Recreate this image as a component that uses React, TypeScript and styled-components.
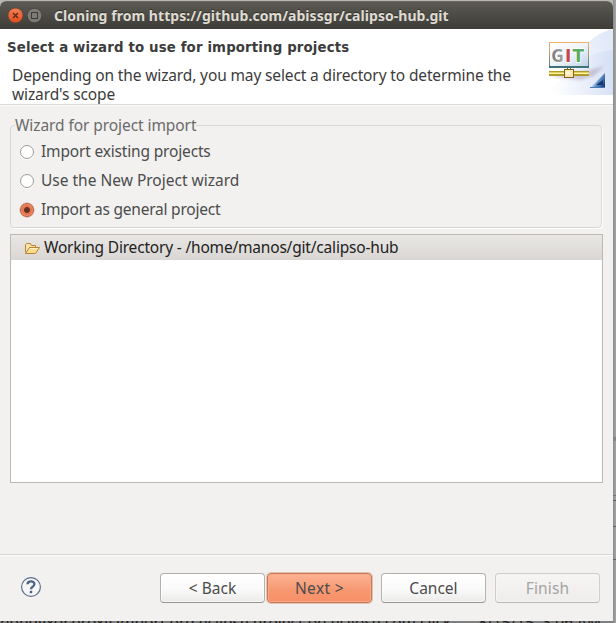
import React, { useState } from 'react';
import styled, { createGlobalStyle, css } from 'styled-components';

const GlobalStyle = createGlobalStyle`
  *, *::before, *::after { box-sizing: border-box; }
  html, body { margin: 0; padding: 0; overflow: hidden; }
  body { font-family: "Noto Sans", "Open Sans", sans-serif; background: #9c9c9c; }
`;

const Desktop = styled.div`
  width: 616px;
  height: 623px;
  overflow: hidden;
  padding-top: 1px;
  background:
    linear-gradient(#858585, #858585) 613px 437px / 3px 4px no-repeat,
    linear-gradient(#747474, #747474) 613px 495px / 3px 1px no-repeat,
    linear-gradient(#5e5e5e, #5e5e5e) 613px 500px / 3px 1px no-repeat,
    linear-gradient(#606060, #606060) 613px 526px / 3px 1px no-repeat,
    linear-gradient(#606060, #606060) 613px 559px / 3px 1px no-repeat,
    linear-gradient(90deg, #8b8b8b, #a5a5a5) 613px 0 / 3px 100% no-repeat,
    #b4b7b2;
`;

const Window = styled.main`
  width: 613px;
  height: 620px;
  display: flex;
  flex-direction: column;
  border-radius: 6px 6px 0 0;
  overflow: hidden;
  background: #f2f1f0;
  color: #4c4c4c;
`;

const TitleBar = styled.header`
  flex: none;
  height: 28px;
  display: flex;
  align-items: center;
  padding: 0 8px;
  background: linear-gradient(#5b5952, #3d3c37);
  border-top: 1px solid #69675f;
`;

const WindowControl = styled.button`
  width: 15px;
  height: 15px;
  padding: 0;
  margin-right: 4px;
  border: 0;
  background: none;
  svg { display: block; }
`;

const Title = styled.h1`
  margin: 0 0 0 8px;
  font: 700 14px/20px "Noto Sans", sans-serif;
  letter-spacing: 0.05px;
  white-space: nowrap;
  color: #dfdbd2;
  text-shadow: 0 -1px #33322e;
`;

const Banner = styled.section`
  flex: none;
  height: 76px;
  display: flex;
  justify-content: space-between;
  background: #fff;
  border-bottom: 1px solid #dcdad8;
`;

const BannerText = styled.div`
  padding: 10px 0 0 7px;
  white-space: nowrap;
`;

const BannerTitle = styled.h2`
  margin: 0;
  font: 700 13.33px/18px "DejaVu Sans", sans-serif;
  letter-spacing: 0.14px;
  color: #3c3c3c;
`;

const BannerLine = styled.p<{ $first?: boolean }>`
  margin: ${p => (p.$first ? '9px' : '0')} 0 0 5px;
  font-size: 15.5px;
  line-height: 19px;
  letter-spacing: ${p => (p.$first ? '-0.135px' : '-0.12px')};
  color: #3c3c3c;
`;

const BannerArt = styled.svg`
  flex: none;
  display: block;
`;

const Content = styled.section`
  flex: 1;
  padding: 9px 10px 0;
  border-top: 1px solid #fafafa;
`;

const Group = styled.fieldset`
  min-width: 0;
  width: 592px;
  height: 113px;
  margin: 0;
  padding: 0 0 0 9px;
  border: 1px solid #d9d7d4;
  border-radius: 4px;
  box-shadow: 1px 1px #fff;
`;

const Legend = styled.legend`
  margin-left: -5px;
  padding: 0;
  font-size: 15.5px;
  line-height: 20px;
  letter-spacing: -0.08px;
  color: #6c6b6a;
`;

const Options = styled.div`
  margin-top: 1px;
`;

const Option = styled.label<{ $spacing: number }>`
  height: 29px;
  display: flex;
  align-items: center;
  font-size: 15.5px;
  line-height: 20px;
  letter-spacing: ${p => p.$spacing}px;
`;

const Radio = styled.input`
  appearance: none;
  flex: none;
  width: 14px;
  height: 14px;
  margin: 2px 7px 0 0;
  border: 1px solid #9c9a97;
  border-radius: 50%;
  background: #fff;
  box-shadow: 0 1px #fff;
  &:checked {
    border-color: #b8583a;
    background: radial-gradient(circle, #5f3322 0 2.5px, #e97550 3.4px 4.6px, #f39873 6px);
    box-shadow: 0 0 0 0.5px #d99c86;
  }
`;

const Tree = styled.div`
  width: 593px;
  height: 249px;
  margin-top: 6px;
  border: 1px solid #beb8b2;
  background: #fff;
`;

const TreeRow = styled.div`
  height: 25px;
  padding: 0 0 2px 13px;
  display: flex;
  align-items: center;
  gap: 3px;
  background: linear-gradient(#e9e7e5, #d9d6d3);
  font-size: 15.5px;
  line-height: 20px;
  letter-spacing: -0.19px;
  color: #222;
  white-space: pre;
  svg { display: block; margin-top: 2px; }
`;

const Footer = styled.footer`
  flex: none;
  height: 67px;
  display: flex;
  align-items: flex-start;
  padding: 17px 13px 0 20px;
  border-top: 1px solid #d9d7d5;
  box-shadow: inset 0 1px #fbfbfa;
`;

const Help = styled.button`
  width: 22px;
  height: 22px;
  margin: 4px auto 0 0;
  padding: 0;
  border: 0;
  background: none;
  svg { display: block; }
`;

const Button = styled.button<{ $kind?: 'default' | 'plain'; $gap?: number; $spacing?: number }>`
  width: 105px;
  height: 30px;
  margin: 1px 0 0 ${p => p.$gap ?? 0}px;
  padding: 0 0 1px;
  border: 1px solid #b4b1ad;
  border-bottom-color: #989590;
  border-radius: 4px;
  background: linear-gradient(#fff, #fafafa 55%, #ebeae9);
  box-shadow: inset 0 0 0 1px rgba(255, 255, 255, 0.6);
  font: 15.5px/20px "Noto Sans", sans-serif;
  letter-spacing: ${p => p.$spacing ?? 0}px;
  color: #4c4c4c;
  &:disabled {
    color: #a5a4a2;
    border-color: #cfccc9;
    border-bottom-color: #bcb9b5;
    background: linear-gradient(#f6f5f4, #eeedec);
    box-shadow: inset 0 0 0 1px #f6f5f4;
  }
  ${p =>
    p.$kind === 'default' &&
    css`
      border-color: #c17959;
      background: linear-gradient(#fcb294, #f79770 60%, #f78f68);
      box-shadow: inset 0 0 0 1px #fbaa88, 0 0 0 1px #e5c2b3;
    `}
`;

const Behind = styled.div`
  width: 613px;
  height: 2px;
  overflow: hidden;
  display: flex;
  justify-content: space-between;
  padding: 0 12px 0 0;
  background: #7e7e7e;
  color: #202020;
  font: 15.5px/16px "Noto Sans", sans-serif;
  white-space: nowrap;
  span { margin-top: -7px; }
`;

function GitArt() {
  return (
    <BannerArt width="73" height="66" viewBox="540 29 73 66">
      <defs>
        <linearGradient id="sky" x1="0" y1="0.7" x2="1" y2="0.4">
          <stop offset="0.05" stopColor="#fff" />
          <stop offset="0.55" stopColor="#f0f4fc" />
          <stop offset="1" stopColor="#e2e9f8" />
        </linearGradient>
        <linearGradient id="swoosh" x1="0" x2="1">
          <stop offset="0.3" stopColor="#dfe7f8" stopOpacity="0" />
          <stop offset="1" stopColor="#ccd9f3" stopOpacity="0.6" />
        </linearGradient>
        <linearGradient id="frame" x1="0" y1="0" x2="0" y2="1">
          <stop offset="0" stopColor="#edb163" />
          <stop offset="0.45" stopColor="#b0a17b" />
          <stop offset="1" stopColor="#447a80" />
        </linearGradient>
        <linearGradient id="screen" x1="0" y1="0" x2="1" y2="1">
          <stop offset="0" stopColor="#fff" />
          <stop offset="0.5" stopColor="#eef4fa" />
          <stop offset="1" stopColor="#bdd1e6" />
        </linearGradient>
        <linearGradient id="letterG" x1="0" x2="1">
          <stop offset="0" stopColor="#777" />
          <stop offset="1" stopColor="#a9a9a9" />
        </linearGradient>
        <linearGradient id="corner" x1="0" x2="1" y1="0.2" y2="0.8">
          <stop offset="0.3" stopColor="#e1efff" />
          <stop offset="0.6" stopColor="#5e8cc4" />
          <stop offset="1" stopColor="#183a77" />
        </linearGradient>
        <filter id="soft" x="-20%" y="-50%" width="140%" height="200%">
          <feGaussianBlur stdDeviation="1.8" />
        </filter>
      </defs>
      <path d="M540 95C562 83 568 70 582 50C590 39 600 32 613 29V95Z" fill="url(#sky)" />
      <path d="M568 66C584 58 597 51 613 50V95H540C554 90 558 73 568 66Z" fill="url(#swoosh)" />
      <path d="M549 76L590 70L604 66L594 76L580 80Z" fill="#a99bb4" opacity="0.5" filter="url(#soft)" />
      <rect x="549.5" y="42.5" width="39" height="25" fill="url(#screen)" stroke="url(#frame)" />
      <path d="M549 67H589" stroke="#3f7379" strokeWidth="2" />
      <g fontWeight="700" stroke="#fff" strokeWidth="1.4" paintOrder="stroke">
        <text x="551.2" y="61.6" fontFamily="Open Sans, sans-serif" fontSize="17.5" fill="url(#letterG)">G</text>
        <text x="565" y="61.6" fontFamily="DejaVu Sans, sans-serif" fontSize="17" fill="#c34750">I</text>
        <text x="572.6" y="61.6" fontFamily="DejaVu Sans, sans-serif" fontSize="17" fill="#5aad62">T</text>
      </g>
      <rect x="549" y="71" width="40" height="5" fill="#b19b28" />
      <path d="M549 73.5H589" stroke="#fff6a5" />
      <path d="M549 72.5H589" stroke="#dfcf59" />
      <path d="M567.5 68V70M570.5 68V70" stroke="#726a2a" />
      <rect x="564.5" y="69.5" width="9" height="8" fill="#ffe5a8" stroke="#826222" />
      <rect x="566" y="71" width="4" height="4" fill="#fff5d9" />
      <path d="M605 73V88H590Z" fill="url(#corner)" />
      <path d="M596 85H603V80Z" fill="#153773" />
      <path d="M590 87.5H605" stroke="#4877b7" />
    </BannerArt>
  );
}

const choices = [
  { label: 'Import existing projects', spacing: -0.17 },
  { label: 'Use the New Project wizard', spacing: 0 },
  { label: 'Import as general project', spacing: -0.23 },
];

export default function App() {
  const [selected, setSelected] = useState(2);
  return (
    <>
      <GlobalStyle />
      <Desktop>
        <Window>
          <TitleBar>
            <WindowControl aria-label="Close">
              <svg width="15" height="15" viewBox="0 0 15 15">
                <defs>
                  <linearGradient id="close" x1="0" y1="0" x2="0" y2="1">
                    <stop offset="0" stopColor="#f58156" />
                    <stop offset="1" stopColor="#df4d20" />
                  </linearGradient>
                </defs>
                <circle cx="7.5" cy="7.5" r="7.3" fill="url(#close)" stroke="#863f29" strokeWidth="0.5" />
                <path d="M5 5L10 10M10 5L5 10" stroke="#592414" strokeWidth="1.2" />
              </svg>
            </WindowControl>
            <WindowControl aria-label="Maximize">
              <svg width="15" height="15" viewBox="0 0 15 15">
                <circle cx="7.5" cy="7.5" r="7.3" fill="#7d7b73" stroke="#34332f" strokeWidth="0.6" />
                <rect x="4.5" y="4.5" width="6" height="6" fill="none" stroke="#3c3b37" />
              </svg>
            </WindowControl>
            <Title>Cloning from https://github.com/abissgr/calipso-hub.git</Title>
          </TitleBar>
          <Banner>
            <BannerText>
              <BannerTitle>Select a wizard to use for importing projects</BannerTitle>
              <BannerLine $first>Depending on the wizard, you may select a directory to determine the</BannerLine>
              <BannerLine>wizard's scope</BannerLine>
            </BannerText>
            <GitArt />
          </Banner>
          <Content>
            <Group>
              <Legend>Wizard for project import</Legend>
              <Options>
                {choices.map((choice, i) => (
                  <Option key={choice.label} $spacing={choice.spacing}>
                    <Radio type="radio" name="wizard" checked={selected === i} onChange={() => setSelected(i)} />
                    {choice.label}
                  </Option>
                ))}
              </Options>
            </Group>
            <Tree>
              <TreeRow>
                <svg width="17" height="14" viewBox="0 0 17 14">
                  <path d="M1.5 11.5V3.5L2.5 2.5H6.5L7.5 4.5H11.5V6.5" fill="#fbe3a4" stroke="#b98336" />
                  <path d="M1.5 12.5L5.5 6.5H15.5L11.5 12.5Z" fill="#fcdb8c" stroke="#b98336" strokeLinejoin="round" />
                  <path d="M6 7.5H13.5" stroke="#fff3cc" />
                </svg>
                Working Directory - /home/manos/git/calipso-hub
              </TreeRow>
            </Tree>
          </Content>
          <Footer>
            <Help aria-label="Help">
              <svg width="22" height="22" viewBox="0 0 22 22">
                <circle cx="11" cy="11" r="9.4" fill="#f6f6f7" stroke="#5d6e91" strokeWidth="1.2" />
                <path d="M7.5 8.2C7.7 4.3 14.6 4.5 14.4 8.2C14.3 10.5 11 10.7 11 13.3" fill="none" stroke="#4d6089" strokeWidth="2.3" />
                <rect x="9.8" y="14.8" width="2.4" height="2.4" fill="#4d6089" />
              </svg>
            </Help>
            <Button>&lt; Back</Button>
            <Button $kind="default" $gap={2} $spacing={0.35}>Next &gt;</Button>
            <Button $gap={9}>Cancel</Button>
            <Button $gap={9} $spacing={0.15} disabled>Finish</Button>
          </Footer>
        </Window>
        <Behind aria-hidden="true">
          <span>nopqyxor.proxy import org.eclipse.project on eclipse.com click</span>
          <span>8/15/15, 3:06 AM</span>
        </Behind>
      </Desktop>
    </>
  );
}
